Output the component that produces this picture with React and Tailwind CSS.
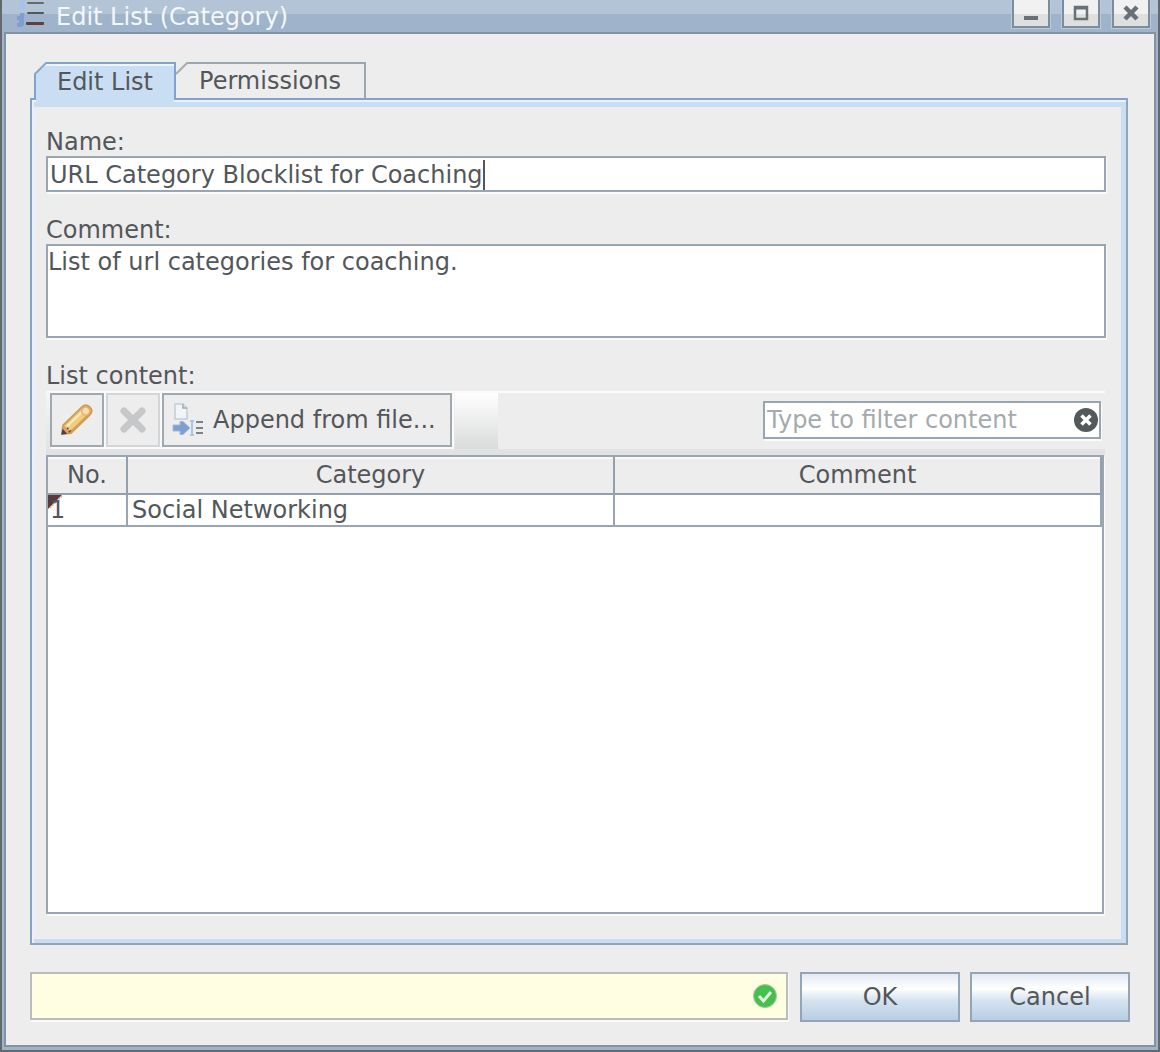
import React, { useState } from "react";

const bevel = "border-2 border-[#99a5b2]";

function ListIcon() {
  return (
    <svg width="30" height="30" viewBox="0 0 30 30" aria-hidden="true">
      <path d="M4 0H9V9H3V5H5Z" fill="#a5c1ec" />
      <path d="M4 13H8V26H6V27H1V23H3V20H1V16H4Z" fill="#7f9fd2" />
      <path d="M8 14H10M8 19H10M8 24H10" stroke="#93b0d9" strokeWidth="2" strokeDasharray="1 1" />
      <rect x="11" y="2" width="17" height="2" rx="1" fill="#6a6a6c" />
      <rect x="11" y="12" width="17" height="2" rx="1" fill="#54565a" />
      <rect x="10" y="22" width="18" height="3" rx="1" fill="#5e3f41" />
    </svg>
  );
}

function PencilIcon() {
  return (
    <svg width="34" height="32" viewBox="0 0 34 32" aria-hidden="true">
      <g transform="translate(2 30) rotate(-44)">
        <path d="M0 0L7 -5.500H33Q38.500 -5.500 38.500 0T33 5.500H7Z" fill="#eece80" stroke="#cf9a58" strokeWidth="2" strokeLinejoin="round" />
        <path d="M8 4.500H32" stroke="#d99e56" strokeWidth="2" />
        <path d="M10 -2H28" stroke="#fff0bd" strokeWidth="2" strokeLinecap="round" />
        <circle cx="33" cy="0" r="4" fill="#f8dcae" stroke="#e2b06c" strokeWidth="1.500" />
        <path d="M3 -2L7 -5L8 5L3 2Z" fill="#e0a066" />
        <path d="M8 -1V1M6 3.500H9" stroke="#7d4a30" strokeWidth="1.500" />
        <path d="M-1 0L4 -3.500V3.500Z" fill="#44484b" />
      </g>
    </svg>
  );
}

function DeleteIcon() {
  return (
    <svg width="28" height="28" viewBox="0 0 28 28" aria-hidden="true">
      <path d="M5 5L23 23M23 5L5 23" stroke="#c5c7c8" strokeWidth="7" strokeLinecap="round" />
    </svg>
  );
}

function AppendIcon() {
  return (
    <svg width="32" height="34" viewBox="0 0 32 34" aria-hidden="true">
      <path d="M3 1H11L15 5V16H3Z" fill="#f1f5f7" stroke="#c3cdd3" strokeWidth="1.500" />
      <path d="M11 1V5H15" fill="#dfe6ea" stroke="#9eabb3" strokeWidth="1.500" />
      <path d="M1 22H8V18.500H11L18 25L11 31.500H8V28H1Z" fill="#7f9fce" stroke="#9fb8df" strokeWidth="1" />
      <path d="M20 18V32M18 18H22M18 32H22" stroke="#a9c6ea" strokeWidth="2" />
      <path d="M24 19H31M24 25H31M24 30H31" stroke="#7b8389" strokeWidth="2" />
    </svg>
  );
}

function ClearIcon() {
  return (
    <svg width="26" height="26" viewBox="0 0 26 26" aria-hidden="true">
      <circle cx="13" cy="13" r="12" fill="#54595c" />
      <path d="M8.500 8.500L17.500 17.500M17.500 8.500L8.500 17.500" stroke="#fff" strokeWidth="3.500" />
    </svg>
  );
}

function CheckIcon() {
  return (
    <svg width="24" height="24" viewBox="0 0 24 24" role="img" aria-label="Valid">
      <circle cx="12" cy="12" r="11.500" fill="#46c04c" stroke="#a9c8a5" />
      <path d="M6 12L10.500 17L18 8" fill="none" stroke="#e3ece0" strokeWidth="3" />
    </svg>
  );
}

function WindowButton({ label, children }) {
  return (
    <button
      type="button"
      aria-label={label}
      className="flex h-[30px] w-[38px] items-center justify-center border-2 border-[#7d8c9c] bg-[linear-gradient(#f0f1f0_55%,#dde0de_55%)] shadow-[0_0_0_1px_#b9cad9]"
    >
      <svg width="18" height="18" viewBox="0 0 18 18" fill="none" stroke="#687078" aria-hidden="true">
        {children}
      </svg>
    </button>
  );
}

function Tab({ active, onClick, children, width }) {
  const look = active
    ? "-mb-[2px] h-[38px] border-[#84a0cf] bg-[#c9def2] shadow-[inset_0_2px_0_#eef5fb] after:absolute after:top-full after:right-0 after:left-0 after:h-[6px] after:bg-[#c9def2]"
    : "h-[36px] border-[#9aa6b0] border-l-0 bg-[#ededed]";
  return (
    <button type="button" role="tab" aria-selected={active} onClick={onClick}
      className={`relative border-2 border-b-0 ${look} ${width}`}>
      <svg className={active ? "absolute -top-[2px] -left-[2px]" : "absolute -top-[2px] left-0"} width="13" height="13" viewBox="0 0 13 13" aria-hidden="true">
        <path d="M0 0H13L0 13Z" fill="#ededed" />
        <path d={active ? "M1 13V12L12 1H13" : "M0 12L11 1H13"} fill="none" stroke={active ? "#8aa6c9" : "#a4adb0"} strokeWidth="2" />
      </svg>
      {children}
    </button>
  );
}

export default function App() {
  const [tab, setTab] = useState("edit");
  const [name, setName] = useState("URL Category Blocklist for Coaching");
  const initial = name === "URL Category Blocklist for Coaching";

  return (
    <div className="flex min-h-screen flex-col border-x-2 border-b-2 border-[#63696f] bg-[#9fb4c8] font-['DejaVu_Sans',sans-serif] text-[24px] leading-[28px] text-[#53575a]">
      <header className="flex h-[32px] shrink-0 items-start justify-between overflow-hidden bg-[linear-gradient(#b3c4d7_14px,#9fb4ca_14px)] pr-[8px] pl-[14px]">
        <div className="flex items-start gap-[10px]">
          <ListIcon />
          <h1 className="pt-[3px] text-[#f3f7fa]">Edit List (Category)</h1>
        </div>
        <div className="-mt-[2px] flex gap-[12px]">
          <WindowButton label="Minimize"><path d="M2 14H16" strokeWidth="4" /></WindowButton>
          <WindowButton label="Maximize"><path d="M3 3H15V15H3Z" strokeWidth="2.500" /><path d="M2 4H16" strokeWidth="3" /></WindowButton>
          <WindowButton label="Close"><path d="M3 3L15 15M15 3L3 15" strokeWidth="4.500" /></WindowButton>
        </div>
      </header>

      <main className="mx-[2px] mb-[3px] flex grow flex-col border-2 border-[#8493a3] bg-[#ededed] px-[24px] pt-[28px] pb-[23px]">
        <div role="tablist" className="flex items-start pl-[4px]">
          <Tab active={tab === "edit"} onClick={() => setTab("edit")} width="w-[142px] z-10">Edit List</Tab>
          <Tab active={tab === "permissions"} onClick={() => setTab("permissions")} width="w-[190px]">Permissions</Tab>
        </div>

        <section className="mr-[2px] flex grow flex-col border-2 border-t-[#84a0cf] border-r-[#95a5b8] border-b-[#95a5b8] border-l-[#84a0cf] pt-[28px] pr-[20px] pb-[29px] pl-[14px] shadow-[inset_2px_2px_0_#e9f1f9,inset_-5px_-4px_0_#c9def2,inset_0_7px_0_#c9def2]">
          <label htmlFor="name">Name:</label>
          <div className="relative flex">
            <input id="name" value={name} onChange={(e) => setName(e.target.value)}
              className={`h-[36px] w-full bg-white px-[2px] pt-[2px] outline-none ${bevel} shadow-[1px_2px_0_#fbfbfb]`} />
            {initial && <span className="absolute top-[4px] left-[437px] h-[30px] w-[2px] bg-[#53575a]" />}
          </div>

          <label htmlFor="comment" className="mt-[24px]">Comment:</label>
          <textarea id="comment" defaultValue="List of url categories for coaching."
            className={`h-[94px] w-full resize-none bg-white pt-[2px] outline-none ${bevel} shadow-[1px_2px_0_#fbfbfb]`} />

          <h2 className="mt-[24px]">List content:</h2>
          <div className="mt-px mr-px flex h-[64px] items-start border-t-2 border-[#fafafa] bg-[linear-gradient(#f6f6f6,#dfe1e2)] pl-[4px]">
            <button type="button" aria-label="Edit" className="flex h-[54px] w-[54px] items-center justify-center border-2 border-[#a1a9b0] bg-[#ededed] shadow-[1px_1px_0_1px_#fafafa]"><PencilIcon /></button>
            <button type="button" aria-label="Delete" disabled className="ml-[2px] flex h-[54px] w-[54px] items-center justify-center border-2 border-[#d3d6d9] bg-[#ededed] shadow-[1px_1px_0_1px_#fafafa]"><DeleteIcon /></button>
            <button type="button" className="ml-[2px] flex h-[54px] w-[290px] items-center gap-[9px] border-2 border-[#a1a9b0] bg-[#ededed] pl-[8px] whitespace-nowrap shadow-[1px_1px_0_1px_#fafafa]"><AppendIcon />Append from file...</button>
            <div className="ml-[3px] h-[56px] w-[43px] bg-[linear-gradient(#ffffff,#d9dbda)]" />
            <div className="flex h-[56px] grow justify-end bg-[#ededed] pt-[8px] pr-[4px]">
              <div className={`flex h-[38px] w-[338px] items-center bg-white ${bevel} shadow-[1px_2px_0_#fbfbfb]`}>
                <input aria-label="Filter content" placeholder="Type to filter content" className="w-0 grow bg-transparent pl-[2px] outline-none placeholder:text-[#a5aaad] placeholder:opacity-100" />
                <button type="button" aria-label="Clear filter"><ClearIcon /></button>
              </div>
            </div>
          </div>

          <div className={`mr-[2px] grow bg-white ${bevel} shadow-[1px_2px_0_#fbfbfb]`}>
            <table className="w-full table-fixed border-collapse">
              <colgroup><col className="w-[79px]" /><col /><col /></colgroup>
              <thead>
                <tr className="h-[37px] bg-[#ededed] shadow-[inset_0_2px_0_#fafafa]">
                  {["No.", "Category", "Comment"].map((h) => (
                    <th key={h} scope="col" className="border-r-2 border-b-2 border-[#92a0ae] p-0 font-normal">{h}</th>
                  ))}
                </tr>
              </thead>
              <tbody>
                <tr className="h-[32px]">
                  <td className="relative border-r-2 border-b-2 border-[#99a5b2] p-0 pl-[2px]">
                    <svg className="absolute top-0 left-0" width="15" height="15" viewBox="0 0 15 15" aria-hidden="true">
                      <path d="M0 0H14L0 14Z" fill="#593b3d" /><path d="M14 1L1 14" stroke="#dcb184" strokeWidth="1.500" strokeDasharray="2 1" />
                    </svg>
                    <span className="relative">1</span>
                  </td>
                  <td className="border-r-2 border-b-2 border-[#99a5b2] p-0 pl-[4px]">Social Networking</td>
                  <td className="border-r-2 border-b-2 border-[#99a5b2] p-0" />
                </tr>
              </tbody>
            </table>
          </div>
        </section>

        <footer className="mt-[27px] flex gap-[10px]">
          <div role="status" className="mr-[2px] flex h-[48px] grow items-center justify-end border-2 border-[#bbbbb9] bg-[#fffee2] pr-[9px] shadow-[1px_2px_0_#fafafa]"><CheckIcon /></div>
          {["OK", "Cancel"].map((t) => (
            <button key={t} type="button" className="h-[50px] w-[160px] border-2 border-[#94a5b6] bg-[linear-gradient(#e3eaf4,#ffffff_32%,#d5e2ef_58%,#b8cee5)]">{t}</button>
          ))}
        </footer>
      </main>
    </div>
  );
}
